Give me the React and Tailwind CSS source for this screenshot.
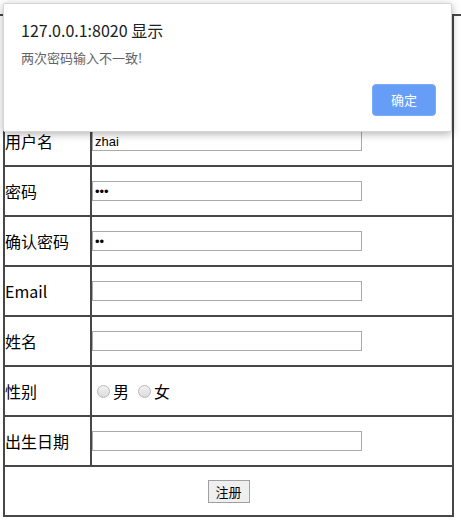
import React from "react";

const font = { fontFamily: '"Noto Sans CJK SC", "Noto Sans", sans-serif' };

function Row({ label, children }) {
  return (
    <div className="grid grid-cols-[85px_1fr] h-[50px] border-t-2 border-[#474747]">
      <div className="flex items-center text-[16px] text-black">{label}</div>
      <div className="flex items-center border-l-2 border-[#474747]">{children}</div>
    </div>
  );
}

function TextInput({ value = "", type = "text" }) {
  return (
    <input
      readOnly
      type={type}
      value={value}
      className="w-[270px] h-[20px] border border-[#a9a9a9] bg-white px-[2px] text-[13px] text-black outline-none"
      style={{ fontFamily: '"Liberation Sans", "Noto Sans CJK SC", sans-serif' }}
    />
  );
}

function Radio({ label }) {
  return (
    <div className="flex items-center">
      <span className="w-[13px] h-[13px] rounded-full border border-[#b8b8b8] bg-gradient-to-b from-[#f2f2f2] to-[#dcdcdc]" />
      <span className="ml-[3px] text-[16px] text-black">{label}</span>
    </div>
  );
}

export default function App() {
  return (
    <div className="relative w-[461px] h-[521px] bg-white overflow-hidden" style={font}>
      <div className="h-[14px]" />
      <div className="h-[2px] bg-[#474747]" />
      <div className="ml-[3px] w-[451px] border-l-2 border-r-2 border-b-2 border-[#474747]">
        <div className="h-[99px] flex items-center justify-center text-[18px] font-bold">用户注册</div>
        <Row label="用户名"><TextInput value="zhai" /></Row>
        <Row label="密码"><TextInput type="password" value="123" /></Row>
        <Row label="确认密码"><TextInput type="password" value="12" /></Row>
        <Row label="Email"><TextInput /></Row>
        <Row label="姓名"><TextInput /></Row>
        <Row label="性别">
          <div className="flex items-center gap-[9px] pl-[5px]">
            <Radio label="男" />
            <Radio label="女" />
          </div>
        </Row>
        <Row label="出生日期"><TextInput /></Row>
        <div className="h-[50px] border-t-2 border-[#474747] flex items-center justify-center">
          <button className="w-[42px] h-[23px] border border-[#a0a0a0] bg-[#efefef] text-[13px] text-black leading-none">
            注册
          </button>
        </div>
      </div>

      <div className="absolute left-[3px] top-[3px] w-[449px] h-[129px] bg-white rounded-[2px] border border-[#d6d6d6] shadow-[0_2px_8px_rgba(0,0,0,0.3)] pt-[16px] pl-[17px] pr-[15px]">
        <div className="text-[16px] leading-[20px] text-[#202124]">127.0.0.1:8020 显示</div>
        <div className="mt-[9px] text-[13px] leading-[18px] text-[#5f6368]">两次密码输入不一致!</div>
        <div className="flex justify-end mt-[17px]">
          <button className="w-[64px] h-[32px] rounded-[4px] bg-[#669df6] border border-[#7aabf7] text-white text-[13px]">
            确定
          </button>
        </div>
      </div>
    </div>
  );
}
